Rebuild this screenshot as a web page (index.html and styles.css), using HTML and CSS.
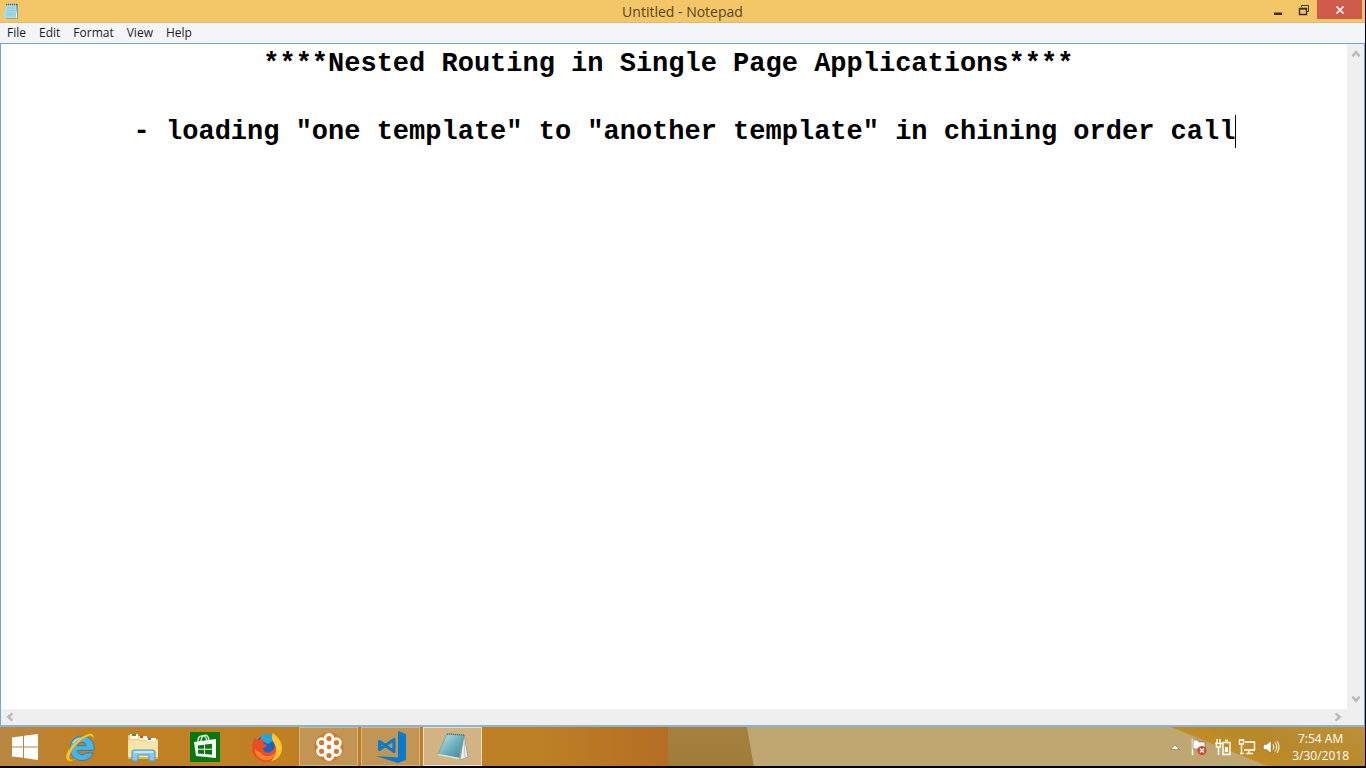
FILE: index.html
```html
<!DOCTYPE html>
<html lang="en">
<head>
<meta charset="utf-8">
<title>Untitled - Notepad</title>
<link rel="stylesheet" href="styles.css">
</head>
<body>
<main class="window">
  <header class="titlebar">
    <svg class="app-icon" viewBox="0 0 18 18" aria-hidden="true">
      <path d="M4 2h12v14.500H4z" fill="#5b8b9e"/>
      <path d="M4 2.500h10.500L13.500 16H1z" fill="#a9dbe6"/>
      <path d="M15.200 3v13h-1.700z" fill="#f4f7f5"/>
      <path d="M5 6h8M5 8.500h8M4.500 11h8M4 13h8" stroke="#83bfd2" stroke-width=".7"/>
      <path d="M4 2.500h11" stroke="#3f6577" stroke-width="1.600" stroke-dasharray="1 1"/>
    </svg>
    <h1 class="title">Untitled - Notepad</h1>
    <div class="controls">
      <button class="control" type="button" aria-label="Minimize"><svg viewBox="0 0 12 12"><path d="M2 8.500h8v2.500H2z" fill="#3c2d0d"/></svg></button>
      <button class="control" type="button" aria-label="Restore"><svg viewBox="0 0 12 12"><path d="M3.500 3V1.500h7v6H9" fill="none" stroke="#4c3b15"/><path d="M1.500 4.500h7v6h-7z" fill="none" stroke="#3c2d0d" stroke-width="1.400"/><path d="M1 4h8v1.500H1z" fill="#3c2d0d"/></svg></button>
      <button class="control close" type="button" aria-label="Close"><svg viewBox="0 0 12 12"><path d="M2.500 2.500l7 7M9.500 2.500l-7 7" stroke="#fff" stroke-width="1.700"/></svg></button>
    </div>
  </header>
  <nav class="menubar" aria-label="Menu bar">
    <button type="button">File</button>
    <button type="button">Edit</button>
    <button type="button">Format</button>
    <button type="button">View</button>
    <button type="button">Help</button>
  </nav>
  <section class="document">
    <div class="editor">
      <textarea class="text" aria-label="Document text" spellcheck="false" wrap="off">                ****Nested Routing in Single Page Applications****

        - loading "one template" to "another template" in chining order call</textarea>
      <span class="caret"></span>
    </div>
    <div class="scroll vertical">
      <button type="button" aria-label="Scroll up"><svg viewBox="0 0 10 10"><path d="M2 7l3-3.500L8 7" /></svg></button>
      <button type="button" aria-label="Scroll down"><svg viewBox="0 0 10 10"><path d="M2 3l3 3.500L8 3" /></svg></button>
    </div>
    <div class="scroll horizontal">
      <button type="button" aria-label="Scroll left"><svg viewBox="0 0 10 10"><path d="M7 2L3.500 5 7 8" /></svg></button>
      <button type="button" aria-label="Scroll right"><svg viewBox="0 0 10 10"><path d="M3 2l3.500 3L3 8" /></svg></button>
    </div>
  </section>
</main>
<footer class="taskbar">
  <div class="apps">
    <button class="app start" type="button" aria-label="Start">
      <svg viewBox="0 0 32 32"><path d="M4 6.500l11-1.500V15.500H4zM16 4.800L30 3v12.500H16zM4 16.500h11v10.300L4 25.500zM16 16.500h14V29l-14-2z" fill="#fff"/></svg>
    </button>
    <button class="app" type="button" aria-label="Internet Explorer">
      <svg viewBox="0 0 32 32">
        <path d="M17 5C10 5 5 10.500 5 17.500S10 29.500 17 29.500c5.500 0 9.500-3 11.200-7.500h-7.500c-.8 1.200-2 1.700-3.600 1.700-2.600 0-4.400-1.600-4.600-4.400H29C30 11 24.500 5 17 5zm-4.500 9.800c.5-2.200 2.200-3.500 4.500-3.500s4 1.300 4.400 3.500z" fill="#48b5ea" stroke="#1879b9" stroke-width=".8"/>
        <path d="M8 12c2-3 5-4.500 9-4.500" fill="none" stroke="#b2e5fa" stroke-width="1.500"/>
        <path d="M28 8.500c2-5-1-7-6-5C12 7 1 20 1 26c0 5 5 5 10 2-5 1.500-7 .5-6.500-2.500C5.500 18.500 15 9 22.500 5.500c3.500-1.500 6-.500 5.500 3z" fill="#f7c82e" stroke="#d79516" stroke-width=".5"/>
      </svg>
    </button>
    <button class="app" type="button" aria-label="File Explorer">
      <svg viewBox="0 0 32 32">
        <path d="M1 5q0-1 1-1h9l2 2h4l1 2h13v20H1z" fill="#e8cf83"/>
        <path d="M3 3h8v5H3zM12 5h8v4h-8zM20 7h9v3h-9z" fill="#fff9e4"/>
        <path d="M5 3h4v2H5z" fill="#3b9b43"/><path d="M13 5h3v2h-3z" fill="#d64530"/><path d="M21 7h3v2h-3z" fill="#3182cf"/>
        <path d="M1 9h10l3 1h17v18H1z" fill="#f5e5a8"/><path d="M1 26h30v2H1z" fill="#dcb760"/>
        <path d="M5 30v-9q0-2 2-2h19q2 0 2 2v9h-6v-6H11v6z" fill="#8bc9e8" stroke="#4b99c7"/>
        <path d="M7 21h19" stroke="#d7f2fc" stroke-width="1.500"/>
      </svg>
    </button>
    <button class="app" type="button" aria-label="Store">
      <svg viewBox="0 0 32 32">
        <path d="M1 1h30v30H1z" fill="#07780c"/>
        <path d="M9 11c-1-8 8-8 9-1M12 10c1-8 7-7 8-1" fill="none" stroke="#d5ecd5" stroke-width="1.500"/>
        <path d="M5 11l22-3v19L7 25z" fill="#fff"/>
        <path d="M9 14.500l6-.7v4H9zM16 13.600l7-.9v5.100h-7zM9 18.800h6v4.300l-6-.5zM16 18.800h7v5l-7-.7z" fill="#07780c"/>
      </svg>
    </button>
    <button class="app" type="button" aria-label="Firefox">
      <svg viewBox="0 0 32 32">
        <circle cx="16" cy="16" r="12" fill="#1f62ba"/><path d="M11 4c7-3 13 0 14 4l-8 5-8-4z" fill="#27a6dd"/>
        <path d="M4 7c1 1 2 1.500 3 2 2-1 4-1 6 0-1 2-1 3 0 4l3 1c0 2-3 2-4 4 1 4 6 5 9 2 3-2 4-5 2-9-2-3-3-6-1-9 5 4 9 8 9 15 0 8-6 14-15 14C8 31 1 25 1 17c0-4 1-7 3-10z" fill="#ee4c28"/>
        <path d="M22 2c5 4 9 8 9 15 0 6-4 12-11 13 5-5 7-12 3-18-2-3-3-7-1-10z" fill="#ffc62d"/>
        <path d="M9 21c4 6 11 5 15 1-1 5-5 8-11 7-6-2-9-6-9-11 2 2 3 3 5 3z" fill="#f78628"/>
      </svg>
    </button>
    <button class="app open" type="button" aria-label="Meeting">
      <svg viewBox="0 0 32 32">
        <circle cx="16" cy="16" r="14.500" fill="#d76a19" opacity=".65"/>
        <g fill="none" stroke="#fff" stroke-width="2.800"><circle cx="16" cy="16" r="3.600"/><circle cx="16" cy="7.500" r="4"/><circle cx="23.400" cy="11.700" r="4"/><circle cx="23.400" cy="20.300" r="4"/><circle cx="16" cy="24.500" r="4"/><circle cx="8.600" cy="20.300" r="4"/><circle cx="8.600" cy="11.700" r="4"/></g>
      </svg>
    </button>
    <button class="app open" type="button" aria-label="Visual Studio Code">
      <svg viewBox="0 0 32 32"><path d="M23 0l8 3v26l-8 3L1 25l22 1.500z" fill="#087bcd"/><path d="M4.500 10.500v8L19 8.500v12z" fill="none" stroke="#087bcd" stroke-width="3" stroke-linejoin="round"/></svg>
    </button>
    <button class="app open active" type="button" aria-label="Notepad">
      <svg viewBox="0 0 32 32">
        <defs><linearGradient id="page" x1="0" y1="0" x2="1" y2="1"><stop stop-color="#cce8e9"/><stop offset=".55" stop-color="#69aebb"/><stop offset="1" stop-color="#408597"/></linearGradient></defs>
        <path d="M27 4l4 22-8 3z" fill="#ecefe9" stroke="#879192" stroke-width=".7"/><path d="M27 11l1 15" stroke="#b3b9b5" stroke-width=".8"/>
        <path d="M10 3l17 1-5 23L1 23z" fill="url(#page)" stroke="#61929b" stroke-width=".6"/>
        <path d="M10 3l17 1" stroke="#526f72" stroke-width="1.500" stroke-dasharray="1 1"/><path d="M1 23.500l21 4" stroke="#d7e4dd" stroke-width="1.500"/>
      </svg>
    </button>
  </div>
  <div class="tray">
    <button type="button" aria-label="Show hidden icons"><svg viewBox="0 0 18 18"><path d="M4.500 11.500L9 7l4.500 4.500z" fill="#fff" stroke="#7b6640" stroke-width=".6"/></svg></button>
    <button type="button" aria-label="Action Center"><svg viewBox="0 0 18 18"><path d="M2.500 1v16" stroke="#fff" stroke-width="1.500"/><path d="M3 2h5l1 2h6v7H3z" fill="#fff" stroke="#665435" stroke-width=".6"/><circle cx="12" cy="12.500" r="4.500" fill="#d1442f"/><path d="M10 10.500l4 4m0-4l-4 4" stroke="#fff" stroke-width="1.500"/></svg></button>
    <button type="button" aria-label="Power"><svg viewBox="0 0 18 18"><g fill="none" stroke="#fff" stroke-width="1.400"><path d="M3 1v4M6 1v4M1 5.500h7M2.500 6v3h4V6M4.500 9v8M9 4.500h7v12H9zM11 2.500h3"/></g><path d="M11 9h3v5h-3z" fill="#fff"/></svg></button>
    <button type="button" aria-label="Network"><svg viewBox="0 0 18 18"><g fill="none" stroke="#fff" stroke-width="1.400"><path d="M7 4h9.500v8H6M8 15.500h7M11 12v3.500M1.500 2h4v4h-4zM3.500 6v9.500M2 15.500h4"/></g></svg></button>
    <button type="button" aria-label="Volume"><svg viewBox="0 0 18 18"><path d="M1.500 6.500h3L9 3v12l-4.500-3.500h-3z" fill="#fff" stroke="#665435" stroke-width=".4"/><path d="M11 6.500q2 2.500 0 5M13 4.500q3.500 4.500 0 9M15 3q4 6 0 12" fill="none" stroke="#fff"/></svg></button>
    <time class="clock" datetime="2018-03-30T07:54">7:54 AM<br>3/30/2018</time>
  </div>
</footer>
</body>
</html>
```
FILE: styles.css
```css
* {
  box-sizing: border-box;
}

body {
  margin: 0;
  min-height: 100vh;
  padding: 0 1px 2px 0;
  display: flex;
  flex-direction: column;
  background: #000;
  font-family: "Open Sans", "Noto Sans", sans-serif;
}

button {
  margin: 0;
  padding: 0;
  border: 0;
  background: none;
  font: inherit;
  color: inherit;
}

svg {
  display: block;
}

.window {
  flex: 1;
  display: flex;
  flex-direction: column;
}

.titlebar {
  display: grid;
  grid-template-columns: 1fr auto 1fr;
  height: 23px;
  background: #f3c667;
  border-bottom: 1px solid #d5bd86;
}

.app-icon {
  width: 18px;
  height: 18px;
  margin: 2px;
}

.title {
  margin: 0;
  font-size: 14px;
  font-weight: 400;
  line-height: 23px;
  color: #57451d;
}

.controls {
  display: flex;
  justify-content: flex-end;
  padding-right: 3px;
}

.control {
  display: flex;
  align-items: center;
  justify-content: center;
  width: 26px;
  height: 19px;
}

.control svg {
  width: 12px;
  height: 12px;
}

.close {
  width: 45px;
  background: #cf5b4c;
}

.menubar {
  display: flex;
  gap: 13px;
  height: 20px;
  padding-left: 7px;
  background: #f3f5f8;
  font-size: 12px;
  line-height: 20px;
  color: #1c1c1c;
}

.document {
  flex: 1;
  display: grid;
  grid-template-columns: 1fr 17px;
  grid-template-rows: 1fr 16px;
  border: 1px solid #6fa8dc;
  border-bottom: 2px solid #8db4cf;
  background: #efefef;
}

.editor {
  position: relative;
  display: grid;
  background: #fff;
  font-family: "Liberation Mono", monospace;
  font-size: 27px;
  font-weight: 700;
  line-height: 34px;
}

.text {
  width: 100%;
  height: 100%;
  margin: 0;
  padding: 3px;
  border: 0;
  outline: 0;
  resize: none;
  overflow: hidden;
  background: none;
  font: inherit;
  color: #000;
}

.caret {
  position: absolute;
  top: 71px;
  left: calc(76ch + 3px);
  width: 1px;
  height: 33px;
  background: #000;
}

.scroll {
  display: flex;
  justify-content: space-between;
  align-items: center;
}

.scroll svg {
  width: 12px;
  height: 12px;
  fill: none;
  stroke: #b9b9b9;
  stroke-width: 2;
}

.vertical {
  flex-direction: column;
  padding: 4px 0;
}

.horizontal {
  padding: 0 3px;
}

.taskbar {
  display: flex;
  justify-content: space-between;
  height: 39px;
  background:
    linear-gradient(22deg, transparent 34%, #c18d24 35%, #b8882a 55%, #bd9138) right / 200px 100% no-repeat,
    linear-gradient(80deg, transparent 0 84px, #bfa771 85px) 668px 0 no-repeat,
    linear-gradient(#a5803e, #a07b39) 668px 0 no-repeat,
    linear-gradient(90deg, #b98743, #c18024 80px, #bd8025 540px, #b56d24 668px);
}

.apps {
  display: flex;
  gap: 3px;
}

.app {
  display: flex;
  align-items: center;
  justify-content: center;
  width: 59px;
  border: 1px solid transparent;
}

.app svg {
  width: 32px;
  height: 32px;
}

.start {
  width: 48px;
}

.open {
  border-color: #d7b47d;
  background: #c39554;
}

.active {
  border-color: #efe0c5;
  background: #d1b384;
}

.tray {
  display: flex;
  align-items: center;
  gap: 6px;
  padding-right: 16px;
}

.tray svg {
  width: 18px;
  height: 18px;
}

.clock {
  margin-left: 6px;
  font-size: 12px;
  line-height: 17px;
  text-align: center;
  color: #fff;
}
```
